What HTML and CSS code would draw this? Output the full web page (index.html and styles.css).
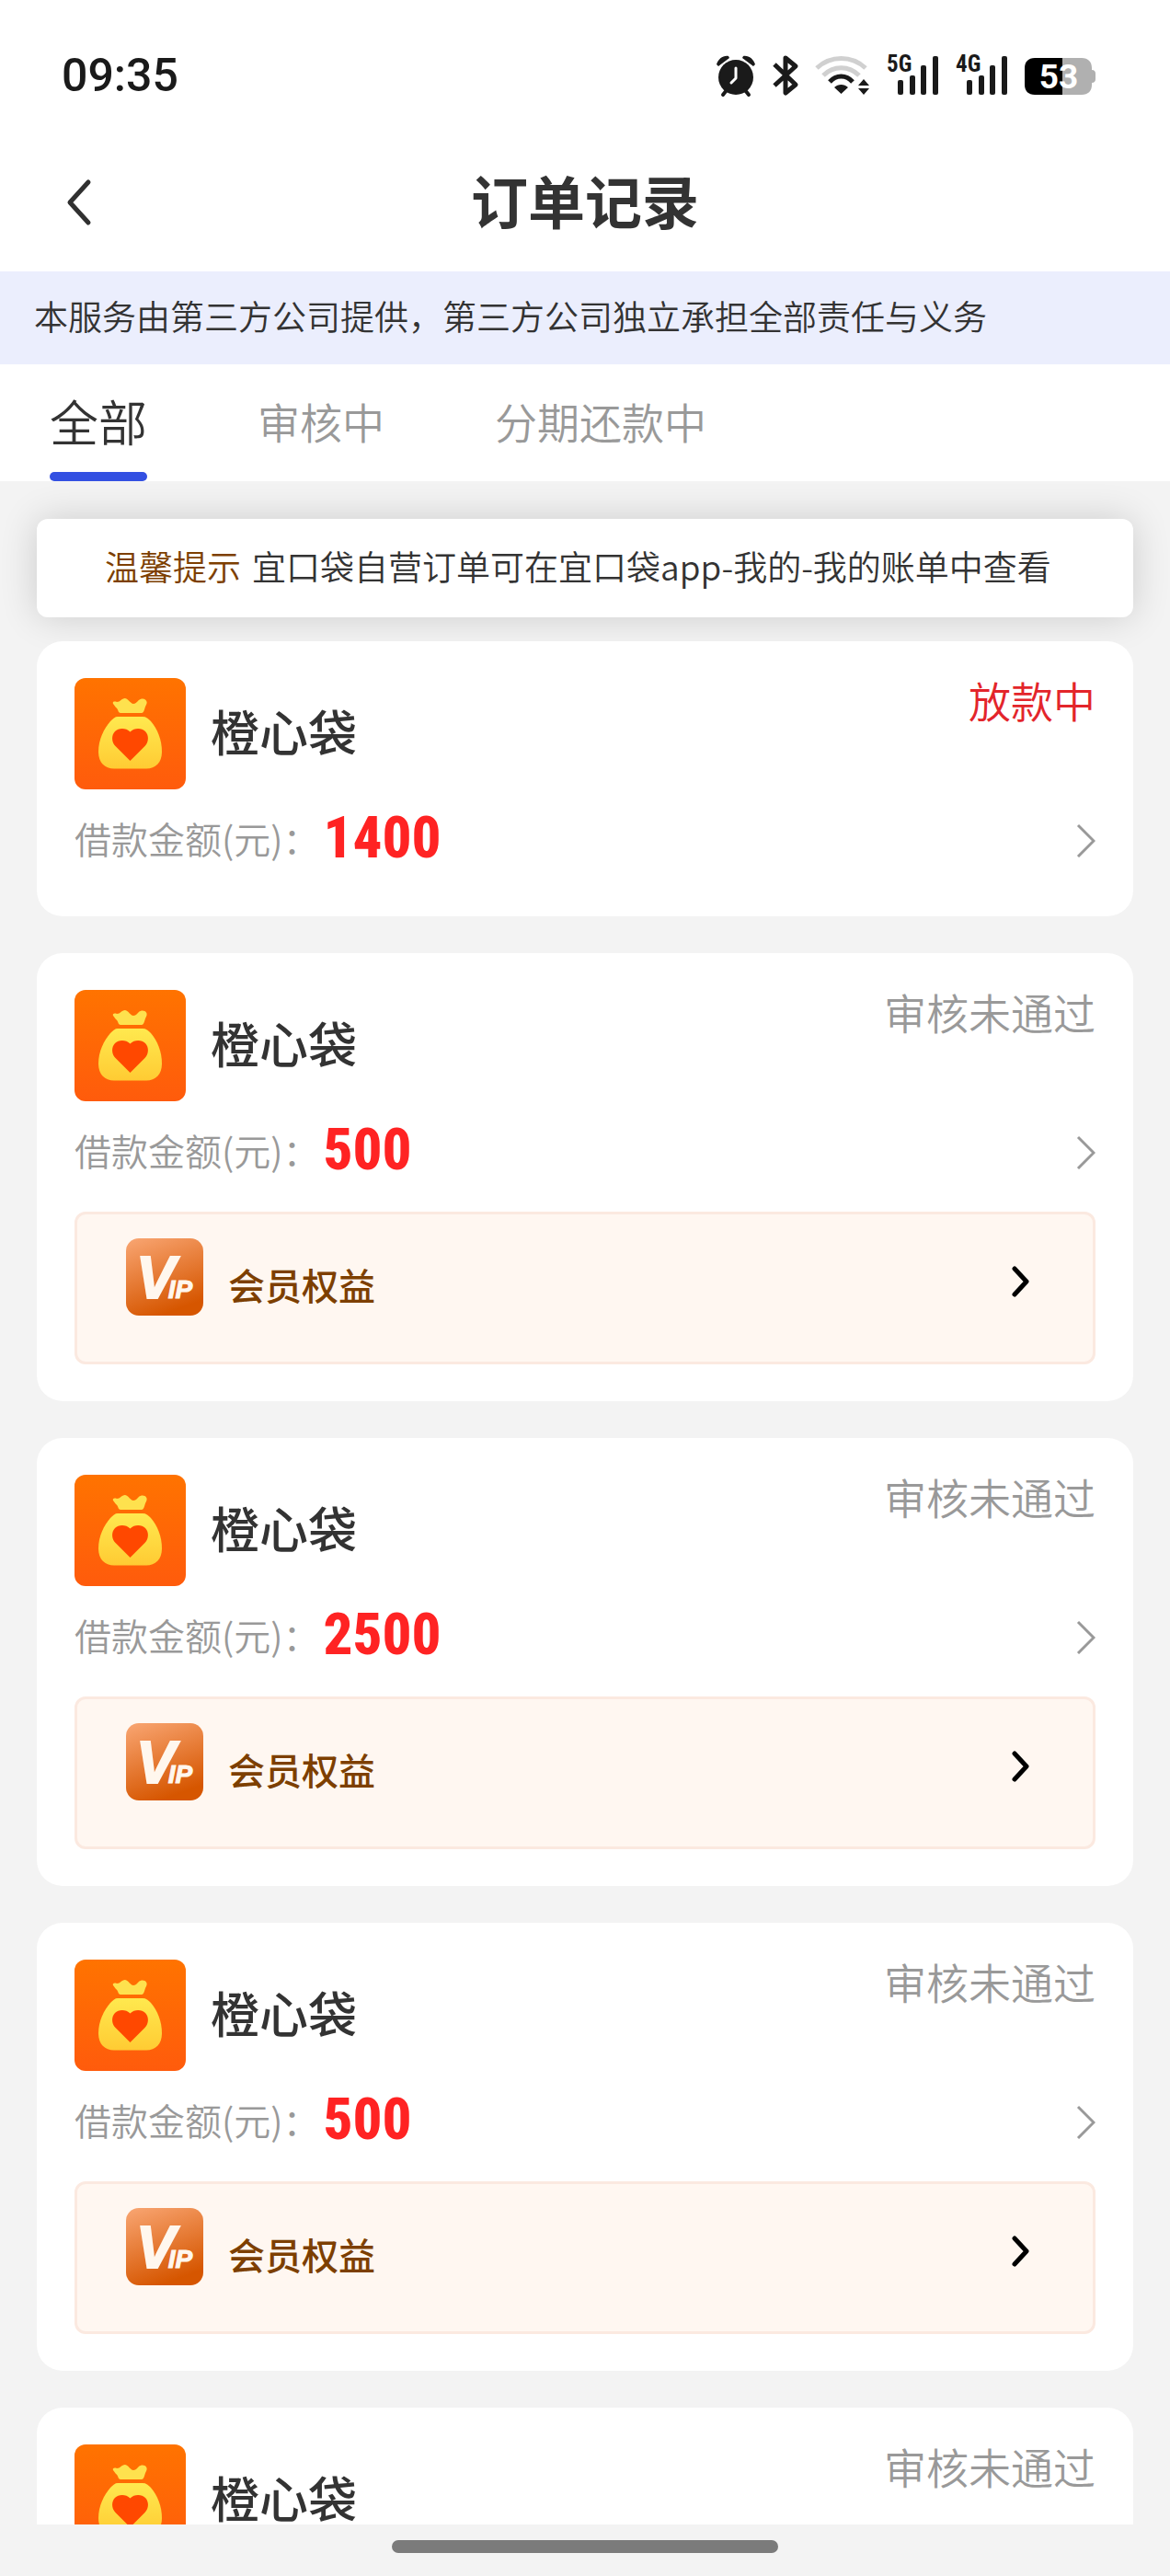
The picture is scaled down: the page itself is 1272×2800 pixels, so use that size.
FILE: index.html
```
<!DOCTYPE html>
<html lang="zh-CN">
<head>
    <meta charset="UTF-8">
    <meta name="viewport" content="width=device-width, initial-scale=1.0">
    <title>订单记录</title>
    <link rel="stylesheet" href="styles.css">
</head>
<body>

    <!-- shared icons -->
    <svg class="sprite" width="0" height="0" aria-hidden="true">
        <defs>
            <linearGradient id="bag-fill" x1="0" y1="0" x2="0" y2="1">
                <stop offset="0" stop-color="#ffe94f"/>
                <stop offset="1" stop-color="#ffcb33"/>
            </linearGradient>
        </defs>
        <symbol id="icon-bag" viewBox="0 0 121 121">
            <path fill="#fee14e" d="M42 28C41 26 43 25 46 26C50 26 51 22 55 22C59 23 61 28 64 28C68 28 69 23 73 22.500C77 22 80 25 78 29C76 32 76 38 73 38H50C47 38 48 34 45 32Z"/>
            <path fill="url(#bag-fill)" d="M47 42H74C78 42 80 44 83 47C90 55 95 67 95 80C95 92 88 98.500 78 98.500H43C33 98.500 26 92 26 80C26 67 32 55 39 47C42 44 44 42 47 42Z"/>
            <path fill="#ff4800" d="M60.500 90L44.500 74C40 69.500 40 62 44 58C48 54 56 54 60.500 58.500C65 54 73 54 77 58C81 62 81 69.500 76.500 74Z"/>
        </symbol>
        <symbol id="icon-arrow" viewBox="0 0 22 42">
            <path d="M3 7L20 24L3 41" fill="none" stroke="#999" stroke-width="3"/>
        </symbol>
        <symbol id="icon-arrow-bold" viewBox="0 0 20 96">
            <path d="M3 33L16 47L3 61" fill="none" stroke="#000" stroke-width="5" stroke-linecap="round" stroke-linejoin="round"/>
        </symbol>
        <symbol id="icon-signal" viewBox="0 0 57 44">
            <g fill="#1a1a1a">
                <rect x="12" y="27" width="6" height="16" rx="2"/>
                <rect x="25" y="22" width="6" height="21" rx="2"/>
                <rect x="37" y="11" width="6" height="32" rx="2"/>
                <rect x="50" y="1" width="6" height="42" rx="2"/>
            </g>
        </symbol>
    </svg>

    <header class="header">
        <div class="status-bar">
            <span class="time">09:35</span>
            <div class="status-icons">
                <svg width="44" height="44" viewBox="0 0 44 44">
                    <circle cx="22" cy="24" r="19" fill="#1a1a1a"/>
                    <path d="M12 38L8 43M32 38L36 43" stroke="#1a1a1a" stroke-width="4" stroke-linecap="round"/>
                    <path d="M1 10C3 4 8 0 14 1L15 3L3 12Z M43 10C41 4 36 0 30 1L29 3L41 12Z" fill="#1a1a1a"/>
                    <path d="M22 14V25L17 30" fill="none" stroke="#fff" stroke-width="3" stroke-linecap="round" stroke-linejoin="round"/>
                </svg>
                <svg width="28" height="44" viewBox="0 0 28 44">
                    <path d="M2 10L25 32L14 41V3L25 12L2 33" fill="none" stroke="#1a1a1a" stroke-width="5" stroke-linejoin="round"/>
                </svg>
                <svg width="60" height="44" viewBox="0 0 60 44">
                    <path d="M2 14C17 0 40 0 55 14" fill="none" stroke="#d0d0d0" stroke-width="5"/>
                    <path d="M9 22C20 11 37 11 48 22" fill="none" stroke="#d0d0d0" stroke-width="5"/>
                    <path d="M16 29C23 21 34 21 41 29" fill="none" stroke="#1a1a1a" stroke-width="5"/>
                    <path d="M28.500 42L21 35C25 31 32 31 36 35Z M47 33L53 26L59 33Z M47 36L53 43L59 36Z" fill="#1a1a1a"/>
                </svg>
                <svg width="57" height="44" viewBox="0 0 57 44">
                    <text class="net" x="0" y="18">5G</text>
                    <use href="#icon-signal"/>
                </svg>
                <svg width="57" height="44" viewBox="0 0 57 44">
                    <text class="net" x="0" y="18">4G</text>
                    <use href="#icon-signal"/>
                </svg>
                <svg width="77" height="44" viewBox="0 0 77 44">
                    <path d="M11 3H62C69 3 73 7 73 14V32C73 39 69 43 62 43H41V3Z" fill="#b0b0b0"/>
                    <path d="M41 3H11C4 3 0 7 0 14V32C0 39 4 43 11 43H41Z" fill="#000"/>
                    <path d="M73 16C76 16 77 18 77 20V26C77 28 76 30 73 30Z" fill="#b0b0b0"/>
                    <text class="battery-level" x="37" y="36" text-anchor="middle">53</text>
                </svg>
            </div>
        </div>

        <nav class="nav">
            <button class="back" type="button" aria-label="返回">
                <svg width="32" height="52" viewBox="0 0 32 52">
                    <path d="M26 4L6 26L26 48" fill="none" stroke="#303030" stroke-width="5" stroke-linecap="round" stroke-linejoin="round"/>
                </svg>
            </button>
            <h1>订单记录</h1>
        </nav>
    </header>

    <p class="notice">本服务由第三方公司提供，第三方公司独立承担全部责任与义务</p>

    <div class="tabs">
        <button class="tab active" type="button">全部</button>
        <button class="tab" type="button">审核中</button>
        <button class="tab" type="button">分期还款中</button>
    </div>

    <main class="content">
        <p class="tip"><span class="tip-title">温馨提示</span>宜口袋自营订单可在宜口袋app-我的-我的账单中查看</p>

        <section class="orders">
            <article class="card">
                <div class="card-top">
                    <svg class="logo"><use href="#icon-bag"/></svg>
                    <h2>橙心袋</h2>
                    <span class="state lending">放款中</span>
                </div>
                <a class="amount-row" href="#">
                    <span class="label">借款金额(元)：</span>
                    <span class="amount">1400</span>
                    <svg class="arrow"><use href="#icon-arrow"/></svg>
                </a>
            </article>

            <article class="card">
                <div class="card-top">
                    <svg class="logo"><use href="#icon-bag"/></svg>
                    <h2>橙心袋</h2>
                    <span class="state">审核未通过</span>
                </div>
                <a class="amount-row" href="#">
                    <span class="label">借款金额(元)：</span>
                    <span class="amount">500</span>
                    <svg class="arrow"><use href="#icon-arrow"/></svg>
                </a>
                <a class="vip" href="#">
                    <svg class="vip-icon" viewBox="0 0 84 84">
                        <text class="vip-v" x="11" y="65">V<tspan class="vip-ip" dx="-8">IP</tspan></text>
                    </svg>
                    <span>会员权益</span>
                    <svg class="vip-arrow"><use href="#icon-arrow-bold"/></svg>
                </a>
            </article>

            <article class="card">
                <div class="card-top">
                    <svg class="logo"><use href="#icon-bag"/></svg>
                    <h2>橙心袋</h2>
                    <span class="state">审核未通过</span>
                </div>
                <a class="amount-row" href="#">
                    <span class="label">借款金额(元)：</span>
                    <span class="amount">2500</span>
                    <svg class="arrow"><use href="#icon-arrow"/></svg>
                </a>
                <a class="vip" href="#">
                    <svg class="vip-icon" viewBox="0 0 84 84">
                        <text class="vip-v" x="11" y="65">V<tspan class="vip-ip" dx="-8">IP</tspan></text>
                    </svg>
                    <span>会员权益</span>
                    <svg class="vip-arrow"><use href="#icon-arrow-bold"/></svg>
                </a>
            </article>

            <article class="card">
                <div class="card-top">
                    <svg class="logo"><use href="#icon-bag"/></svg>
                    <h2>橙心袋</h2>
                    <span class="state">审核未通过</span>
                </div>
                <a class="amount-row" href="#">
                    <span class="label">借款金额(元)：</span>
                    <span class="amount">500</span>
                    <svg class="arrow"><use href="#icon-arrow"/></svg>
                </a>
                <a class="vip" href="#">
                    <svg class="vip-icon" viewBox="0 0 84 84">
                        <text class="vip-v" x="11" y="65">V<tspan class="vip-ip" dx="-8">IP</tspan></text>
                    </svg>
                    <span>会员权益</span>
                    <svg class="vip-arrow"><use href="#icon-arrow-bold"/></svg>
                </a>
            </article>

            <article class="card">
                <div class="card-top">
                    <svg class="logo"><use href="#icon-bag"/></svg>
                    <h2>橙心袋</h2>
                    <span class="state">审核未通过</span>
                </div>
            </article>
        </section>
    </main>

    <footer class="home-bar"><div class="home-handle"></div></footer>

</body>
</html>
```
FILE: styles.css
```
* {
    box-sizing: border-box;
    margin: 0;
    padding: 0;
}

body {
    display: flex;
    flex-direction: column;
    height: 100vh;
    background-color: #f3f3f3;
    color: #333;
    font-family: "Noto Sans CJK SC", sans-serif;
    font-weight: 350;
}

button {
    border: none;
    background: none;
    font: inherit;
    color: inherit;
    cursor: pointer;
}

a {
    color: inherit;
    text-decoration: none;
}

svg {
    display: block;
    flex-shrink: 0;
    overflow: visible;
}

.sprite {
    position: absolute;
}

/* header */
.header {
    background-color: #fff;
    padding-bottom: 19px;
}

.status-bar {
    display: flex;
    align-items: center;
    justify-content: space-between;
    height: 164px;
    padding: 0 81px 0 67px;
}

.time {
    font-family: Roboto, sans-serif;
    font-size: 50px;
    font-weight: 500;
    color: #1a1a1a;
}

.status-icons {
    display: flex;
    align-items: center;
    gap: 18px;
}

.net {
    font-family: "Roboto Condensed", Roboto, sans-serif;
    font-size: 25px;
    font-weight: 700;
    fill: #1a1a1a;
}

.battery-level {
    font-family: Roboto, sans-serif;
    font-size: 37px;
    font-weight: 700;
    fill: #fff;
}

.nav {
    display: grid;
    grid-template-columns: 1fr auto 1fr;
    align-items: center;
    height: 112px;
    padding: 0 70px;
}

.back {
    justify-self: start;
}

h1 {
    padding-bottom: 6px;
    font-size: 62px;
    font-weight: 700;
    line-height: 80px;
}

.notice {
    background-color: #ebeefd;
    padding: 22px 37px 26px;
    font-size: 37px;
    line-height: 53px;
}

/* tabs */
.tabs {
    display: flex;
    gap: 120px;
    height: 127px;
    padding: 0 54px;
    background-color: #fff;
}

.tab {
    position: relative;
    padding-bottom: 6px;
    font-size: 46px;
    color: #999;
}

.tab.active {
    font-size: 53px;
    color: #333;
}

.tab.active::after {
    content: "";
    position: absolute;
    left: 0;
    bottom: 0;
    width: 100%;
    height: 10px;
    border-radius: 5px;
    background-color: #3350e2;
}

/* order list */
.content {
    flex: 1;
    min-height: 0;
    overflow-y: auto;
    scrollbar-width: none;
    padding: 41px 40px 0;
}

.tip {
    padding: 25px 74px 29px;
    border-radius: 12px;
    background-color: #fff;
    box-shadow: 0 0 40px rgba(0, 0, 0, 0.16);
    font-size: 37px;
    line-height: 53px;
}

.tip-title {
    margin-right: 12px;
    color: #7d3f00;
}

.orders {
    position: relative;
    display: flex;
    flex-direction: column;
    gap: 40px;
    margin-top: 26px;
}

.card {
    padding: 40px 41px;
    border-radius: 28px;
    background-color: #fff;
}

.card-top {
    display: flex;
    align-items: center;
    gap: 27px;
}

.logo {
    width: 121px;
    height: 121px;
    border-radius: 12px;
    background: linear-gradient(#ff7300, #ff5b0c);
}

h2 {
    padding-bottom: 8px;
    font-size: 53px;
    font-weight: 500;
    line-height: 80px;
}

.state {
    align-self: flex-start;
    margin-left: auto;
    font-size: 46px;
    line-height: 46px;
    color: #999;
}

.state.lending {
    color: #e3252b;
}

.amount-row {
    display: flex;
    align-items: center;
    padding-top: 8px;
    line-height: 90px;
}

.label {
    font-size: 40px;
    color: #999;
}

.amount {
    margin-left: 4px;
    font-family: "Roboto Condensed", Roboto, sans-serif;
    font-size: 63px;
    font-weight: 800;
    color: #ff2323;
}

.arrow {
    width: 22px;
    height: 42px;
    margin-left: auto;
}

.vip {
    display: flex;
    align-items: flex-start;
    margin-top: 22px;
    padding: 26px 68px 34px 53px;
    border: 3px solid #fbe9e0;
    border-radius: 12px;
    background-color: #fff7f1;
    font-size: 40px;
    font-weight: 500;
    line-height: 100px;
    color: #7d3f00;
}

.vip-icon {
    width: 84px;
    height: 84px;
    margin-right: 27px;
    border-radius: 14px;
    background: linear-gradient(160deg, #f9a673, #d65600 85%);
}

.vip-v {
    font-family: "Liberation Sans", sans-serif;
    font-size: 64px;
    font-style: italic;
    font-weight: 700;
    fill: #fff7ee;
    stroke: #fff7ee;
    stroke-width: 2px;
}

.vip-ip {
    font-size: 28px;
    stroke-width: 1px;
}

.vip-arrow {
    width: 20px;
    height: 96px;
    margin-left: auto;
}

/* gesture bar */
.home-bar {
    display: flex;
    justify-content: center;
    height: 56px;
    padding-top: 17px;
}

.home-handle {
    width: 33%;
    height: 14px;
    border-radius: 7px;
    background-color: #7b7b7b;
}
```
